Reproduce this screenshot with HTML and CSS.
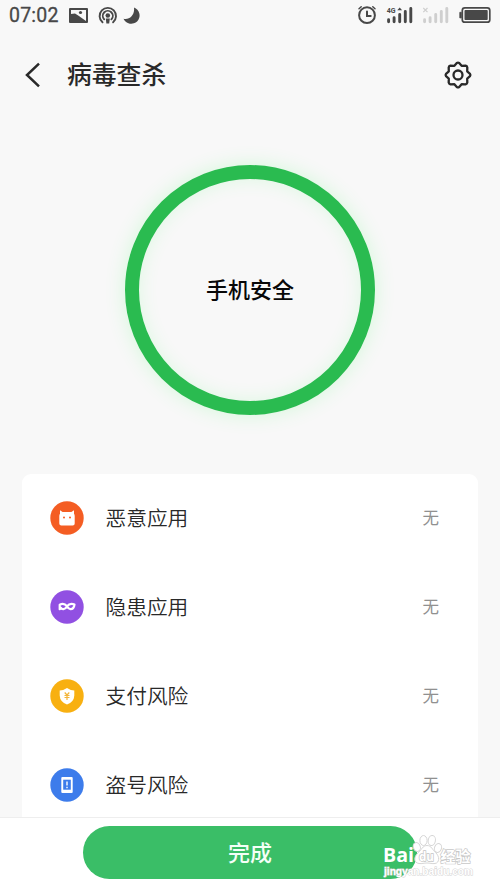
FILE: index.html
```html
<!DOCTYPE html>
<html lang="zh-CN">
<head>
<meta charset="utf-8">
<title>病毒查杀</title>
<link rel="stylesheet" href="styles.css">
</head>
<body>
<div class="screen">
  <div class="status">
    <span class="time">07:02</span>
    <svg class="status-left" width="74" height="24" viewBox="68 4 74 24">
      <path fill="#484848" fill-rule="evenodd" d="M70 8h17a1 1 0 0 1 1 1v13a1 1 0 0 1-1 1H70a1 1 0 0 1-1-1V9a1 1 0 0 1 1-1zM71 10v4l4-.5 4 2.500 2 1.500 5 3.500V10z"/>
      <circle cx="80.500" cy="12.500" r="1.600" fill="#484848"/>
      <g fill="none" stroke="#484848" stroke-width="1.900" stroke-linecap="round">
        <path d="M102.500 22.300a8.200 8.200 0 1 1 10.600 0M104.200 19.300a5 5 0 1 1 7.200 0"/>
      </g>
      <circle cx="107.800" cy="15.500" r="2.300" fill="#484848"/><path fill="#484848" d="M105.800 18.500h4l-.6 5h-2.800z"/>
      <path fill="#484848" d="M134 7.500a8.400 8.400 0 1 1-10.500 11.300c6 1.500 11.500-3.800 10.500-11.300z"/>
    </svg>
    <svg class="status-right" width="138" height="28" viewBox="355 2 138 28">
      <g fill="none" stroke="#484848" stroke-width="2" stroke-linecap="round">
        <circle cx="367" cy="15.200" r="7.900"/><path d="M367 11.500v4.500h3.700"/><path d="M359 8.700l2.200-2M375 8.700L372.800 6.700" stroke-width="1.500"/>
      </g>
      <g stroke="#484848" stroke-width="2.900" stroke-linecap="round"><path d="M388.600 19.800v2M394.100 17.800v4M399.700 14.500v7.300M405.300 11.500v10.300M410.800 8.500v13.300"/></g>
      <text x="386.700" y="13" class="net">4G</text><path d="M397.300 10.200l2.400-2.700 2.400 2.700z" fill="#484848"/>
      <g stroke="#cfcfcf" stroke-width="2.900" stroke-linecap="round"><path d="M424.600 19.800v2M430.100 17.800v4M435.700 14.500v7.300M441.300 11.500v10.300M446.800 8.500v13.300"/></g>
      <path d="M423.300 8l4.200 4.200M427.500 8l-4.200 4.200" stroke="#cfcfcf" stroke-width="1.200"/>
      <rect x="462.300" y="7.900" width="27.500" height="14.300" rx="2.500" fill="none" stroke="#484848" stroke-width="1.700"/>
      <rect x="464.500" y="10.100" width="23.200" height="9.900" rx=".8" fill="#484848"/><path d="M459.800 12.300h1.500v5.600h-1.500z" fill="#484848" stroke="#484848" stroke-width=".8"/>
    </svg>
  </div>
  <div class="titlebar">
    <svg class="back" width="18" height="28" viewBox="24 61 18 28"><path d="M39 63.700L27 75l12 11.300" fill="none" stroke="#292929" stroke-width="2.500"/></svg>
    <h1>病毒查杀</h1>
    <svg class="gear" width="30" height="30" viewBox="-15 -15 30 30">
      <g fill="none" stroke="#292929" stroke-width="2.300" stroke-linejoin="round">
        <path d="M-1.200-12Q0-12.800 1.200-12L3.600-9.200 7.600-9.300Q9-9 9.300-7.600L9.200-3.600 12-1.200Q12.800 0 12 1.200L9.200 3.600 9.300 7.600Q9 9 7.600 9.300L3.600 9.200 1.200 12Q0 12.800-1.200 12L-3.600 9.200-7.600 9.300Q-9 9-9.300 7.600L-9.200 3.600-12 1.200Q-12.800 0-12-1.200L-9.200-3.600-9.300-7.600Q-9-9-7.600-9.300L-3.600-9.200z"/>
        <circle r="4.500"/>
      </g>
    </svg>
  </div>
  <div class="ring">手机安全</div>
  <div class="list">
    <div class="row">
      <svg width="34" height="34" viewBox="-17 -17 34 34"><circle r="16.700" fill="#f45d23"/><path fill="#fff" d="M-7-7.800l2.600 1.900h8.800L7-7.800v3.600q.7 1 .7 2.300v7.400q0 2-2 2H-5.700q-2 0-2-2v-7.400q0-1.300.7-2.300z"/><circle cx="-3" cy="-.5" r="1" fill="#f45d23"/><circle cx="3" cy="-.5" r="1" fill="#f45d23"/></svg>
      <span class="name">恶意应用</span><span class="value">无</span>
    </div>
    <div class="row">
      <svg width="34" height="34" viewBox="-17 -17 34 34"><circle r="16.700" fill="#9150e2"/><path fill="none" stroke="#fff" stroke-width="2.200" stroke-linejoin="round" d="M-7.300-2.300Q-3-4.500 0-.8 3-4.500 7.500-2.500 6.800 2.300 3.500 2.200 1.500 2 0-.8-1.500 2-3.500 2.200-5 2.200-6 .8L-7.300 2.200z"/></svg>
      <span class="name">隐患应用</span><span class="value">无</span>
    </div>
    <div class="row">
      <svg width="34" height="34" viewBox="-17 -17 34 34"><circle r="16.700" fill="#f8b011"/><path fill="#fff" d="M0-8Q4-5.500 7.300-5.500V-.5Q7 6 0 8.500-7 6-7.300-.5v-5Q-4-5.500 0-8z"/><path d="M-2.300-3.500L0-1l2.300-2.500M0-1v5M-2.500-.5h5M-2.500 1.500h5" fill="none" stroke="#f3b53a" stroke-width="1.200"/></svg>
      <span class="name">支付风险</span><span class="value">无</span>
    </div>
    <div class="row">
      <svg width="34" height="34" viewBox="-17 -17 34 34"><circle r="16.700" fill="#3d7ceb"/><rect x="-5.700" y="-8" width="11.400" height="16" rx="1" fill="#fff"/><rect x="-3.800" y="-5.300" width="7.600" height="10" fill="#3d7ceb"/><path d="M0-3.500v4M0 1.800v1.500" stroke="#fff" stroke-width="1.400"/></svg>
      <span class="name">盗号风险</span><span class="value">无</span>
    </div>
  </div>
  <div class="footer">
    <div class="done">完成</div>
    <svg class="mark" width="102" height="54" viewBox="378 832 102 54">
      <g fill="#fff" stroke="#d6d6d6" stroke-width="1">
        <path d="M427 845.500c4.500 0 5.500 4.500 8.500 7 4.500 4 4 10.500-.5 11-3 .4-5-.5-8-.5s-5 .9-8 .5c-5.500-.7-5.500-7-.5-11 3-2.500 4-7 8.500-7z"/>
        <ellipse cx="416.800" cy="847" rx="3.500" ry="4.500" transform="rotate(-20 416.800 847)"/><ellipse cx="423.500" cy="840.500" rx="3.600" ry="5"/><ellipse cx="431.800" cy="840.500" rx="3.600" ry="5" transform="rotate(10 431.800 840.500)"/><ellipse cx="438" cy="848" rx="3.500" ry="4.500" transform="rotate(20 438 848)"/>
      </g>
      <text x="383" y="862" class="bai" textLength="31" lengthAdjust="spacingAndGlyphs">Bai</text>
      <text x="419" y="860.500" class="du" textLength="15" lengthAdjust="spacingAndGlyphs">du</text>
      <text x="440.500" y="862" class="exp">经验</text>
      <text x="384" y="875" class="url" textLength="89" lengthAdjust="spacingAndGlyphs">jingyan.baidu.com</text>
    </svg>
  </div>
</div>
</body>
</html>
```

FILE: styles.css
```css
* { box-sizing: border-box; }
body {
  margin: 0;
  background: #f8f8f8;
  font-family: Roboto, "Noto Sans CJK SC", sans-serif;
  color: #292929;
}
.screen {
  height: 889px;
  display: flex;
  flex-direction: column;
  overflow: hidden;
}
.status {
  height: 32px;
  flex: none;
  display: flex;
  align-items: center;
  padding: 0 7px 0 9px;
}
.time {
  width: 59px;
  font-size: 19.500px;
  line-height: 32px;
  letter-spacing: 0.200px;
  color: #484848;
  -webkit-text-stroke: 0.300px #484848;
}
.status-right { margin-left: auto; }
.net { font: 700 7px Roboto, sans-serif; fill: #484848; }
.titlebar {
  height: 86px;
  flex: none;
  display: flex;
  align-items: center;
  padding: 0 27px 0 24px;
}
.titlebar h1 {
  margin: 0 auto 0 25px;
  padding-top: 1px;
  font-size: 24.800px;
  line-height: 36px;
  font-weight: 500;
}
.ring {
  width: 250px;
  height: 250px;
  flex: none;
  margin: 47px auto 59px;
  padding-bottom: 4px;
  border: 14px solid #2abb50;
  border-radius: 50%;
  box-shadow: 0 0 20px rgba(70, 255, 100, 0.200), inset 0 0 18px rgba(70, 255, 100, 0.150);
  display: flex;
  align-items: center;
  justify-content: center;
  font-size: 22px;
  font-weight: 500;
  color: #080808;
}
.list {
  flex: 1;
  min-height: 0;
  overflow: hidden;
  margin: 0 22px;
  background: #fff;
  border-radius: 9px 9px 0 0;
}
.row {
  height: 89px;
  display: flex;
  align-items: center;
  padding: 0 39px 2px 28px;
}
.name { margin-left: 21.500px; padding-bottom: 1px; font-size: 20.700px; font-weight: 350; }
.value { margin-left: auto; padding-bottom: 2px; font-size: 16.500px; color: #909090; }
.footer {
  position: relative;
  height: 72px;
  flex: none;
  padding-top: 8px;
  background: #fff;
  border-top: 1px solid #eee;
}
.done {
  width: 334px;
  height: 53px;
  margin: 0 auto;
  border-radius: 27px;
  background: #3abe67;
  color: #f4fff7;
  font-size: 22px;
  font-weight: 500;
  line-height: 56px;
  text-align: center;
}
.mark { position: absolute; left: 378px; top: 14px; }
.bai { font: 700 19px "Open Sans", sans-serif; fill: #fff; }
.du { font: 700 13px "Open Sans", sans-serif; fill: #fff; stroke: #c4c4c4; stroke-width: 1.500px; paint-order: stroke; }
.exp { font: 700 15px "Noto Sans CJK SC", sans-serif; fill: #fff; stroke: #c8c8c8; stroke-width: 1.400px; paint-order: stroke; }
.url { font: 700 10px "Liberation Sans", sans-serif; fill: #fff; stroke: #d2d2d2; stroke-width: 0.900px; paint-order: stroke; }
```
